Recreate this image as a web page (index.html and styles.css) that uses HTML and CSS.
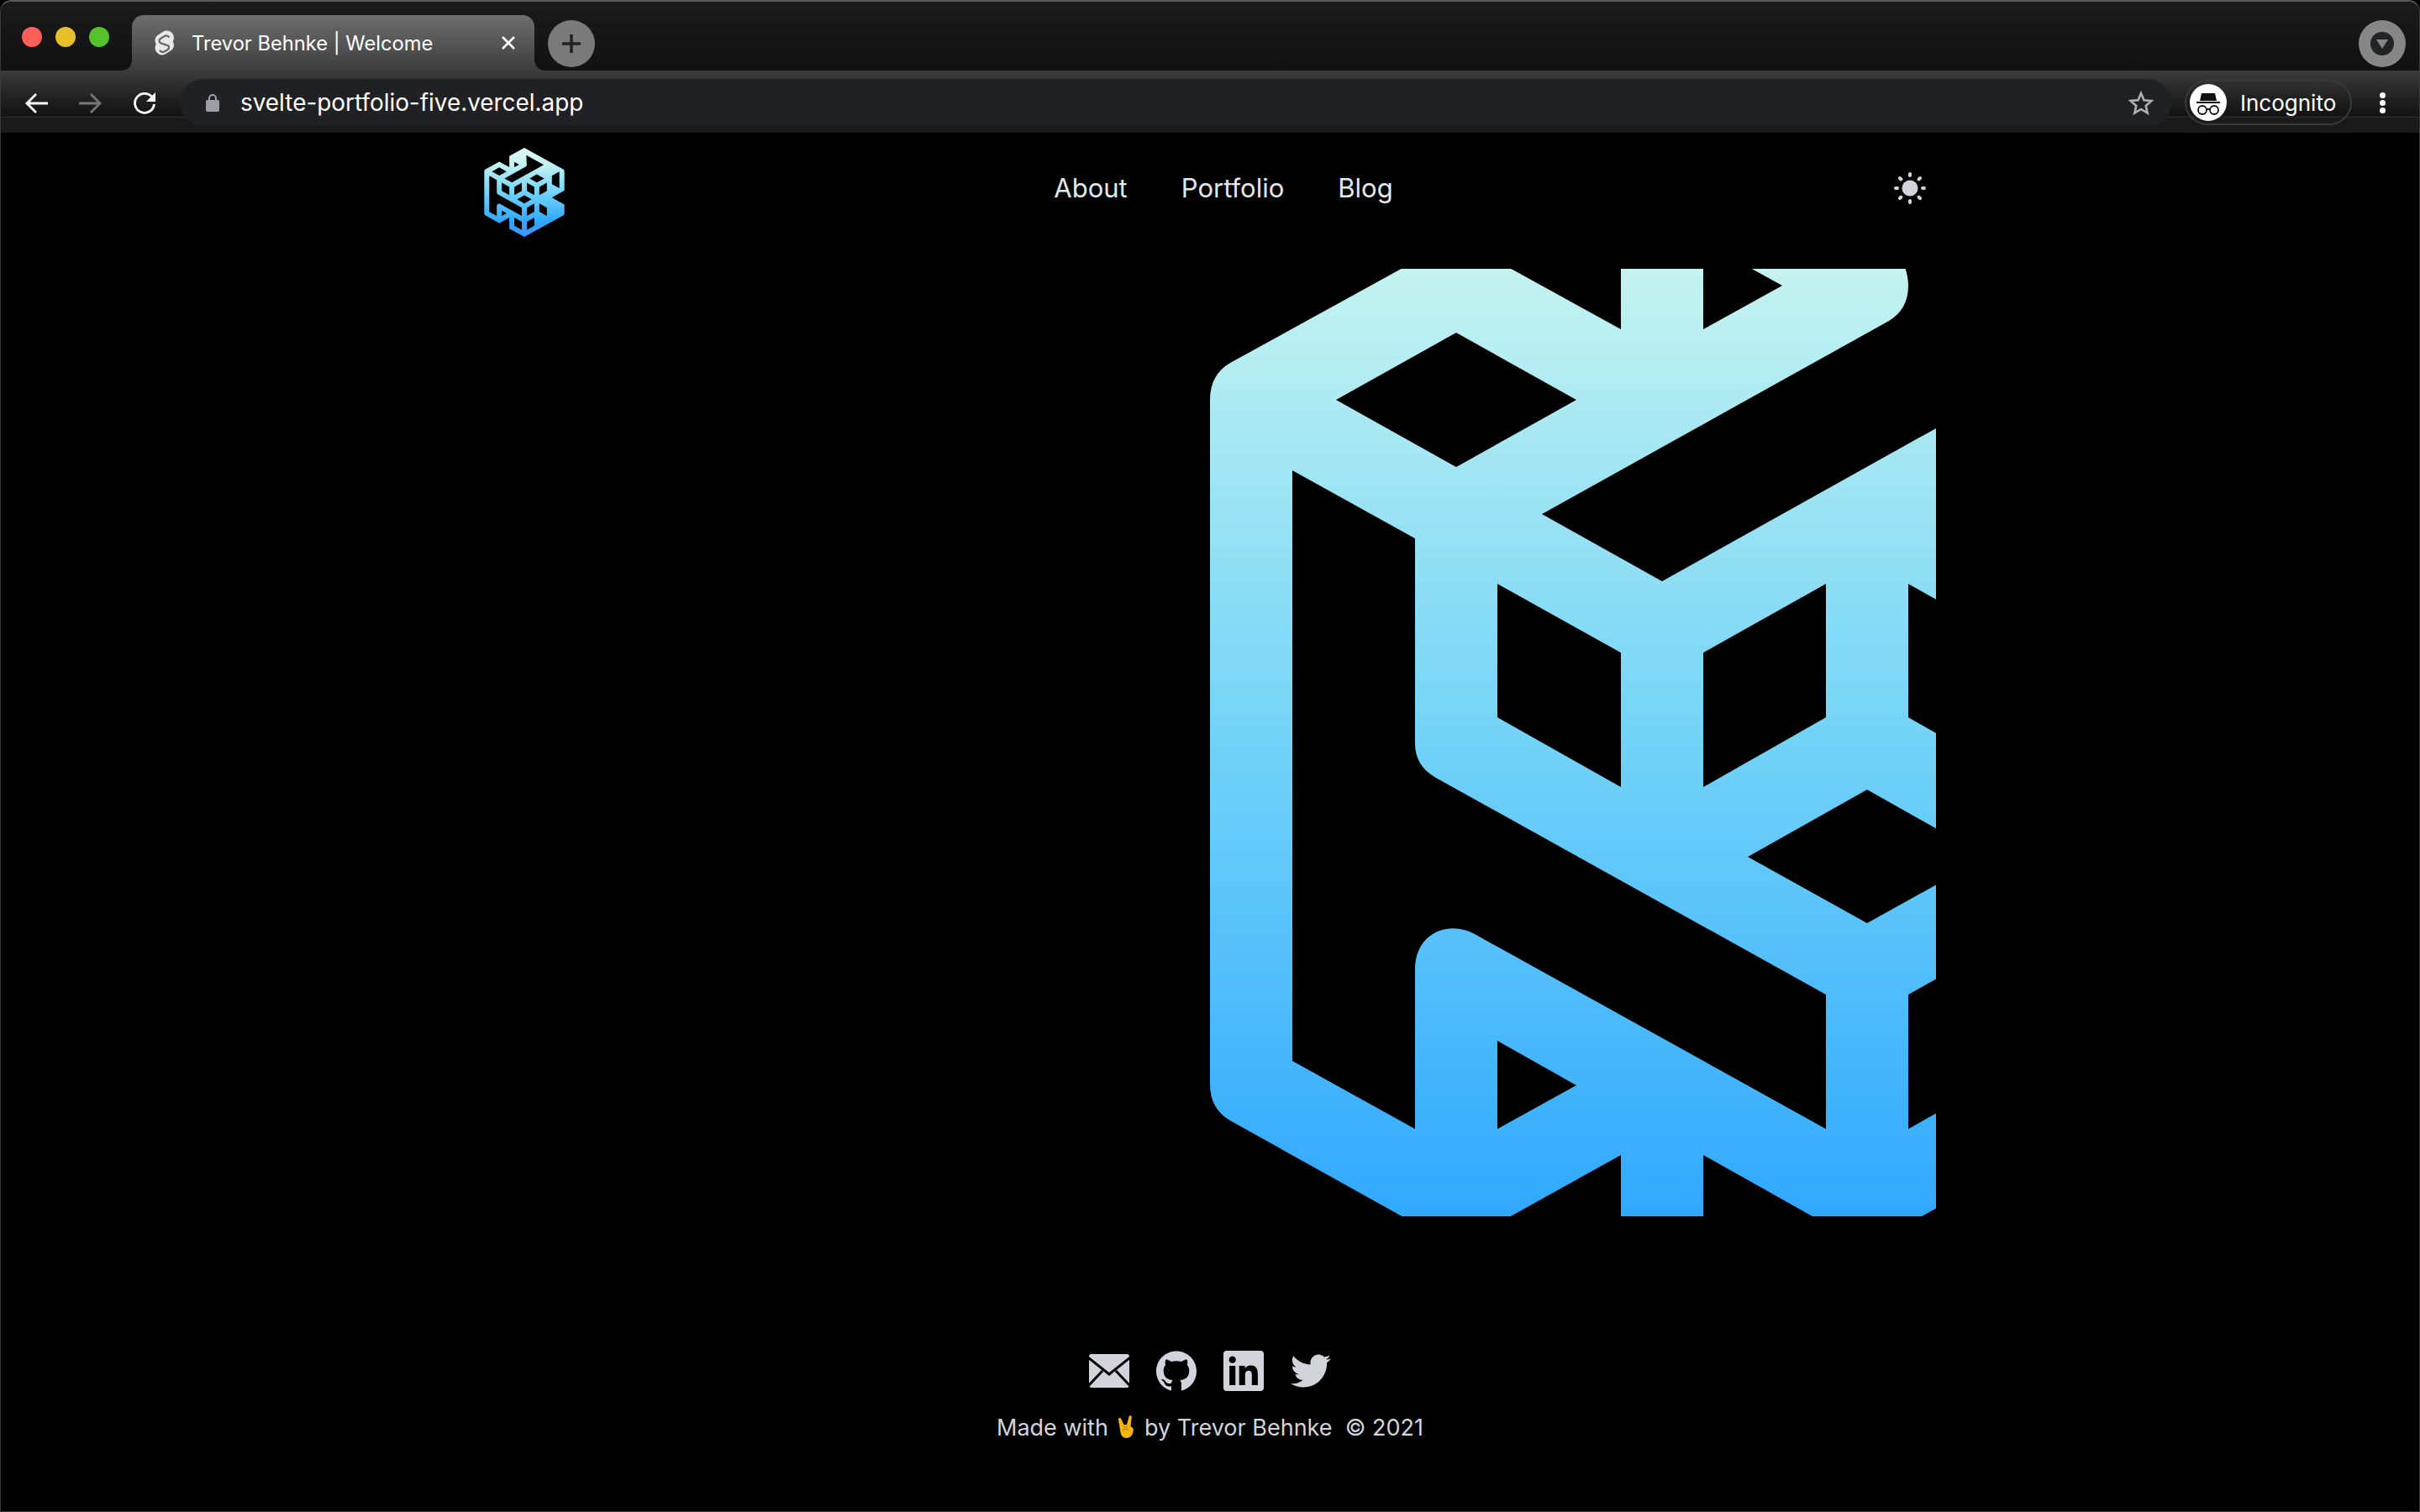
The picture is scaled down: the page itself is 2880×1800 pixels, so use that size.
FILE: index.html
```html
<!DOCTYPE html>
<html lang="en">
<head>
    <meta charset="UTF-8">
    <meta name="viewport" content="width=device-width, initial-scale=1.0">
    <title>Trevor Behnke | Welcome</title>
    <link rel="stylesheet" href="styles.css">
</head>
<body>
    <div class="window">
        <!-- Browser tabs -->
        <div class="tab-strip">
            <div class="traffic-lights">
                <span class="light light-red"></span>
                <span class="light light-yellow"></span>
                <span class="light light-green"></span>
            </div>
            <div class="tab">
                <svg class="favicon" viewBox="0 0 24 30">
                    <path d="M21 3.500C18.500 0 13.500-.5 10 1.800L4 5.700C2 7 .8 9 .6 11.300c-.2 1.900.2 3.700 1.200 5.200-.7 1.100-1.100 2.200-1.200 3.500-.2 2.300.5 4.500 1.900 6.300 2.500 3.500 7.500 4 11 1.700l6-3.900c2-1.300 3.200-3.300 3.400-5.600.2-1.900-.2-3.700-1.200-5.200.7-1.100 1.100-2.200 1.200-3.500.2-2.300-.5-4.500-1.900-6.300z" fill="#e8e8e8"/>
                    <path d="M17.500 8.500c-1.500-2-4-2.500-6-1.300L7 10c-2 1.300-1.800 4 .2 5.200l8.600 3c2 1.200 1.600 3.500-.2 4.800l-3.600 2.200c-2 1.200-4.500.7-6-1.300" fill="none" stroke="#666" stroke-width="2.200"/>
                </svg>
                <span class="tab-title">Trevor Behnke | Welcome</span>
                <svg class="tab-close" viewBox="0 0 18 18">
                    <path d="M2 2l14 14M16 2L2 16" stroke="#fff" stroke-width="2.600"/>
                </svg>
            </div>
            <div class="new-tab">
                <svg viewBox="0 0 24 24" width="24" height="24">
                    <path d="M12 1v22M1 12h22" stroke="#222" stroke-width="3.500"/>
                </svg>
            </div>
            <div class="tab-search">
                <span class="tab-search-inner"></span>
            </div>
        </div>

        <!-- Address bar -->
        <div class="toolbar">
            <svg class="tool-icon" viewBox="0 0 28 26">
                <path d="M27 13H3M13 2L2 13l11 11" fill="none" stroke="#fff" stroke-width="2.800"/>
            </svg>
            <svg class="tool-icon" viewBox="0 0 28 26">
                <path d="M1 13h24M15 2l11 11-11 11" fill="none" stroke="#777" stroke-width="2.800"/>
            </svg>
            <svg class="tool-icon tool-reload" viewBox="0 0 28 26">
                <path d="M24 7A11.500 11.500 0 1 0 25.500 14" fill="none" stroke="#fff" stroke-width="2.800"/>
                <path d="M27 0v11H16z" fill="#fff"/>
            </svg>
            <div class="omnibox">
                <svg class="lock" viewBox="0 0 16 22">
                    <path d="M4 9V6a4 4 0 0 1 8 0v3" fill="none" stroke="#9aa0a6" stroke-width="2"/>
                    <rect x="0" y="8" width="16" height="14" rx="2" fill="#9aa0a6"/>
                </svg>
                <span class="url">svelte-portfolio-five.vercel.app</span>
                <svg class="star" viewBox="0 0 30 29">
                    <path d="M15 3l3.500 8.200 8.900.8-6.700 5.900 2 8.700-7.700-4.600-7.700 4.600 2-8.700L2.600 12l8.900-.8z" fill="none" stroke="#b0b0b0" stroke-width="2.600"/>
                </svg>
            </div>
            <div class="incognito">
                <span class="incognito-avatar">
                    <svg viewBox="0 0 44 44" width="44" height="44">
                        <path d="M14 11h16l2 9H12z" fill="#111"/>
                        <path d="M8 21h28v2H8z" fill="#111"/>
                        <circle cx="15" cy="31" r="5" fill="none" stroke="#111" stroke-width="1.800"/>
                        <circle cx="29" cy="31" r="5" fill="none" stroke="#111" stroke-width="1.800"/>
                        <path d="M20 30h4" stroke="#111" stroke-width="1.800"/>
                    </svg>
                </span>
                <span class="incognito-label">Incognito</span>
            </div>
            <div class="kebab"><span></span><span></span><span></span></div>
        </div>

        <!-- Page -->
        <main class="page">
            <header class="site-header">
                <a class="logo-link" href="#">
                    <svg class="logo-small" viewBox="1440 14 1564 1738">
                        <defs>
                            <linearGradient id="logoFill" gradientUnits="userSpaceOnUse" x1="0" y1="14" x2="0" y2="1752">
                                <stop offset="0" stop-color="#e2fbf6"/>
                                <stop offset="0.176" stop-color="#c4f3f0"/>
                                <stop offset="0.5" stop-color="#72d3f7"/>
                                <stop offset="0.825" stop-color="#30a8fe"/>
                                <stop offset="1" stop-color="#4490ff"/>
                            </linearGradient>
                            <path id="logoShape" fill="url(#logoFill)" fill-rule="evenodd" d="M2222 14L2980 432Q3004 446 3004 476V848L2760 984L3004 1120V1291Q3004 1320 2980 1334L2222 1752L1929 1593V1375L1733 1484L1464 1334Q1440 1320 1440 1291V476Q1440 446 1464 432L1733 284L1929 392V175Z
                            M1538 560L1684 641V885Q1684 912 1709 926L2173 1184V1344L1755 1112C1725 1095 1684 1110 1684 1154V1344L1538 1263Z
                            M1590 476L1733 396L1876 476L1733 556Z
                            M1782 695L1929 777V937L1782 854Z
                            M2173 695L2027 777V937L2173 854Z
                            M1782 1239L1876 1292L1782 1344Z
                            M2262 159L2601 344L1978 692L1835 612L2248 382Q2271 368 2271 340Q2271 330 2267 318Z
                            M2027 288L2121 340L2027 392Z
                            M2080 1020L2222 940L2364 1020L2222 1099Z
                            M2271 695L2417 777V937L2271 854Z
                            M2271 1184L2417 1102V1262L2271 1344Z
                            M2027 1375L2173 1457V1616L2027 1534Z
                            M2271 1457L2417 1375V1534L2271 1616Z
                            M2324 612L2467 532L2610 612L2467 692Z
                            M2515 777L2662 695V854L2515 937Z
                            M2760 560L2906 478V800L2760 722Z
                            M2515 1102L2662 1184V1344L2515 1262Z"/>
                        </defs>
                        <use href="#logoShape"/>
                    </svg>
                </a>
                <nav class="site-nav">
                    <a href="#">About</a>
                    <a href="#">Portfolio</a>
                    <a href="#">Blog</a>
                </nav>
                <svg class="sun" viewBox="0 0 38 38">
                    <circle cx="19" cy="19" r="9.500" fill="#d1d5db"/>
                    <g stroke="#d1d5db" stroke-width="4" stroke-linecap="round">
                        <path d="M19 2v2M19 34v2M2 19h2M34 19h2M7 7l1.400 1.400M29.600 29.600L31 31M7 31l1.400-1.400M29.600 8.400L31 7"/>
                    </g>
                </svg>
            </header>

            <section class="hero">
                <div class="hero-left"></div>
                <svg class="logo-big" viewBox="1440 320 864 1128">
                    <use href="#logoShape"/>
                </svg>
            </section>

            <footer class="site-footer">
                <div class="socials">
                    <svg class="social" viewBox="0 0 48 48">
                        <rect x="0" y="4" width="48" height="40" rx="3" fill="#d1d5db"/>
                        <path d="M-1 8l25 20L49 8M-1 42l17-18M49 42L32 24" fill="none" stroke="#000" stroke-width="3"/>
                    </svg>
                    <svg class="social" viewBox="0 0 24 24">
                        <path fill="#d1d5db" d="M12 .297c-6.630 0-12 5.373-12 12 0 5.303 3.438 9.800 8.205 11.385.6.113.82-.258.82-.577 0-.285-.01-1.040-.015-2.040-3.338.724-4.042-1.610-4.042-1.610C4.422 18.070 3.633 17.700 3.633 17.700c-1.087-.744.084-.729.084-.729 1.205.084 1.838 1.236 1.838 1.236 1.070 1.835 2.809 1.305 3.495.998.108-.776.417-1.305.76-1.605-2.665-.3-5.466-1.332-5.466-5.930 0-1.310.465-2.380 1.235-3.220-.135-.303-.54-1.523.105-3.176 0 0 1.005-.322 3.300 1.230.96-.267 1.980-.399 3-.405 1.020.006 2.040.138 3 .405 2.280-1.552 3.285-1.230 3.285-1.230.645 1.653.24 2.873.12 3.176.765.84 1.230 1.910 1.230 3.220 0 4.610-2.805 5.625-5.475 5.920.42.36.81 1.096.81 2.220 0 1.606-.015 2.896-.015 3.286 0 .315.21.69.825.57C20.565 22.092 24 17.592 24 12.297c0-6.627-5.373-12-12-12"/>
                    </svg>
                    <svg class="social" viewBox="0 0 24 24">
                        <path fill="#d1d5db" d="M20.447 20.452h-3.554v-5.569c0-1.328-.027-3.037-1.852-3.037-1.853 0-2.136 1.445-2.136 2.939v5.667H9.351V9h3.414v1.561h.046c.477-.9 1.637-1.850 3.370-1.850 3.601 0 4.267 2.370 4.267 5.455v6.286zM5.337 7.433c-1.144 0-2.063-.926-2.063-2.065 0-1.138.92-2.063 2.063-2.063 1.140 0 2.064.925 2.064 2.063 0 1.139-.925 2.065-2.064 2.065zm1.782 13.019H3.555V9h3.564v11.452zM22.225 0H1.771C.792 0 0 .774 0 1.729v20.542C0 23.227.792 24 1.771 24h20.451C23.200 24 24 23.227 24 22.271V1.729C24 .774 23.200 0 22.222 0h.003z"/>
                    </svg>
                    <svg class="social" viewBox="0 0 24 24">
                        <path fill="#d1d5db" d="M23.953 4.570a10 10 0 01-2.825.775 4.958 4.958 0 002.163-2.723c-.951.555-2.005.959-3.127 1.184a4.920 4.920 0 00-8.384 4.482C7.690 8.095 4.067 6.130 1.640 3.162a4.822 4.822 0 00-.666 2.475c0 1.710.87 3.213 2.188 4.096a4.904 4.904 0 01-2.228-.616v.06a4.923 4.923 0 003.946 4.827 4.996 4.996 0 01-2.212.085 4.936 4.936 0 004.604 3.417 9.867 9.867 0 01-6.102 2.105c-.39 0-.779-.023-1.170-.067a13.995 13.995 0 007.557 2.209c9.053 0 13.998-7.496 13.998-13.985 0-.21 0-.42-.015-.63A9.935 9.935 0 0024 4.590z"/>
                    </svg>
                </div>
                <p class="credit">Made with
                    <svg class="rock-hand" viewBox="0 0 20 27">
                        <path d="M1 5c-.4-2 2.500-2.800 3.300-.8L7.500 11h3.500L13.500 1.500c.5-2 3.500-1.300 3.300.7L15.500 13l1.800 1.200c1.200.8 1.700 2 1.500 3.500-.5 5-3.300 9.300-8.300 9.300-4 0-6.500-3-7-7z" fill="#f6b40e"/>
                        <path d="M7 14c1.500-1 3.500-1 5 0M6 17c2-1 5-1 7 .5" fill="none" stroke="#c47f00" stroke-width="1.200"/>
                    </svg>
                    by Trevor Behnke&nbsp; © 2021</p>
            </footer>
        </main>
    </div>
</body>
</html>
```

FILE: styles.css
```css
html, body {
    margin: 0;
    padding: 0;
    background-color: #000;
}

body {
    font-family: Inter, "Liberation Sans", sans-serif;
}

.window {
    display: flex;
    flex-direction: column;
    height: 1800px;
    box-sizing: border-box;
    overflow: hidden;
    border: 1px solid #3a3a3a;
    border-top: 2px solid #5a5a5a;
    border-radius: 14px 14px 0 0;
}

/* Browser tabs */
.tab-strip {
    display: flex;
    height: 82px;
    flex-shrink: 0;
    align-items: flex-end;
    padding-left: 25px;
    background: linear-gradient(#1b1b1b, #111);
}

.traffic-lights {
    display: flex;
    gap: 16px;
    align-self: center;
    margin-top: 2px;
}

.light {
    width: 24px;
    height: 24px;
    border-radius: 50%;
}

.light-red {
    background-color: #fe5f57;
}

.light-yellow {
    background-color: #e6bf2b;
}

.light-green {
    background-color: #55c22b;
}

.tab {
    position: relative;
    display: flex;
    align-items: center;
    box-sizing: border-box;
    width: 479px;
    height: 66px;
    margin-left: 27px;
    padding: 0 22px 0 27px;
    border-radius: 14px 14px 0 0;
    background: linear-gradient(#6e6e6e, #3d3d3d);
}

/* little flares where the tab meets the toolbar */
.tab::before,
.tab::after {
    content: "";
    position: absolute;
    bottom: 0;
    width: 12px;
    height: 12px;
}

.tab::before {
    left: -12px;
    background: radial-gradient(circle at 0 0, transparent 11.5px, #3d3d3d 12px);
}

.tab::after {
    right: -12px;
    background: radial-gradient(circle at 100% 0, transparent 11.5px, #3d3d3d 12px);
}

.favicon {
    width: 24px;
    height: 30px;
    margin-right: 20px;
}

.tab-title {
    flex: 1;
    color: #fff;
    font-size: 23.7px;
    white-space: nowrap;
}

.tab-close {
    width: 18px;
    height: 18px;
}

.new-tab {
    display: flex;
    align-items: center;
    justify-content: center;
    align-self: flex-start;
    width: 56px;
    height: 56px;
    margin: 22px 0 0 16px;
    border-radius: 50%;
    background-color: #7a7a7a;
}

.tab-search {
    display: flex;
    align-items: center;
    justify-content: center;
    align-self: flex-start;
    width: 56px;
    height: 56px;
    margin: 22px 16px 0 auto;
    border-radius: 50%;
    background-color: #868686;
}

.tab-search-inner {
    position: relative;
    width: 28px;
    height: 28px;
    border-radius: 50%;
    background-color: #222327;
}

.tab-search-inner::after {
    content: "";
    position: absolute;
    left: 7px;
    top: 9px;
    border-left: 7px solid transparent;
    border-right: 7px solid transparent;
    border-top: 11px solid #868686;
}

/* Address bar */
.toolbar {
    display: flex;
    align-items: flex-start;
    height: 74px;
    flex-shrink: 0;
    box-sizing: border-box;
    padding: 10px 0 0 29px;
    background: linear-gradient(#3c3c3c 0, #262626 26px, #121212 54px, #2a2a2a 55px, #1a1a1a 57px, #1a1a1a 100%);
}

.tool-icon {
    width: 28px;
    height: 26px;
    margin: 16px 35px 0 0;
}

.tool-reload {
    margin-left: 2px;
}

.omnibox {
    display: flex;
    align-items: center;
    flex: 1;
    height: 56px;
    margin-left: -7px;
    padding: 0 21px 0 31px;
    border-radius: 28px;
    background-color: #202124;
}

.lock {
    width: 16px;
    height: 22px;
    margin-right: 25px;
}

.url {
    flex: 1;
    color: #fff;
    font-size: 27.9px;
}

.star {
    width: 30px;
    height: 29px;
}

.incognito {
    display: flex;
    align-items: center;
    box-sizing: border-box;
    width: 199px;
    height: 54px;
    margin: 1px 0 0 16px;
    padding-left: 4px;
    border: 2px solid #38393b;
    border-radius: 27px;
}

.incognito-avatar {
    display: flex;
    width: 44px;
    height: 44px;
    margin-right: 16px;
    border-radius: 50%;
    background-color: #fff;
}

.incognito-label {
    color: #fff;
    font-size: 26px;
}

.kebab {
    display: flex;
    flex-direction: column;
    gap: 2px;
    margin: 16px 40px 0 33px;
}

.kebab span {
    width: 7px;
    height: 7px;
    border-radius: 50%;
    background-color: #fff;
}

/* Page */
.page {
    flex: 1;
    display: flex;
    flex-direction: column;
    align-items: center;
}

.site-header {
    display: grid;
    grid-template-columns: 1fr auto 1fr;
    align-items: start;
    box-sizing: border-box;
    width: 1728px;
    height: 162px;
    padding: 18px 12px 0 0;
}

.logo-link {
    display: flex;
}

.logo-small {
    width: 96px;
    height: 106px;
}

.site-nav {
    display: flex;
    gap: 64px;
    margin: 29px 0 0 44px;
}

.site-nav a {
    color: #e5e7eb;
    font-size: 31px;
    line-height: 38px;
    text-decoration: none;
}

.sun {
    justify-self: end;
    width: 38px;
    height: 38px;
    margin-top: 29px;
}

.hero {
    display: flex;
    width: 1728px;
    height: 1128px;
}

.hero-left {
    flex: 1;
}

.logo-big {
    display: block;
    width: 864px;
    height: 1128px;
}

.site-footer {
    display: flex;
    flex-direction: column;
    align-items: center;
    padding-top: 160px;
}

.socials {
    display: flex;
    gap: 32px;
}

.social {
    width: 48px;
    height: 48px;
}

.credit {
    margin: 24px 0 0;
    color: #d1d5db;
    font-size: 27px;
    line-height: 40px;
}

.rock-hand {
    width: 20px;
    height: 27px;
    margin: 0 4px;
    vertical-align: -3px;
}
```
